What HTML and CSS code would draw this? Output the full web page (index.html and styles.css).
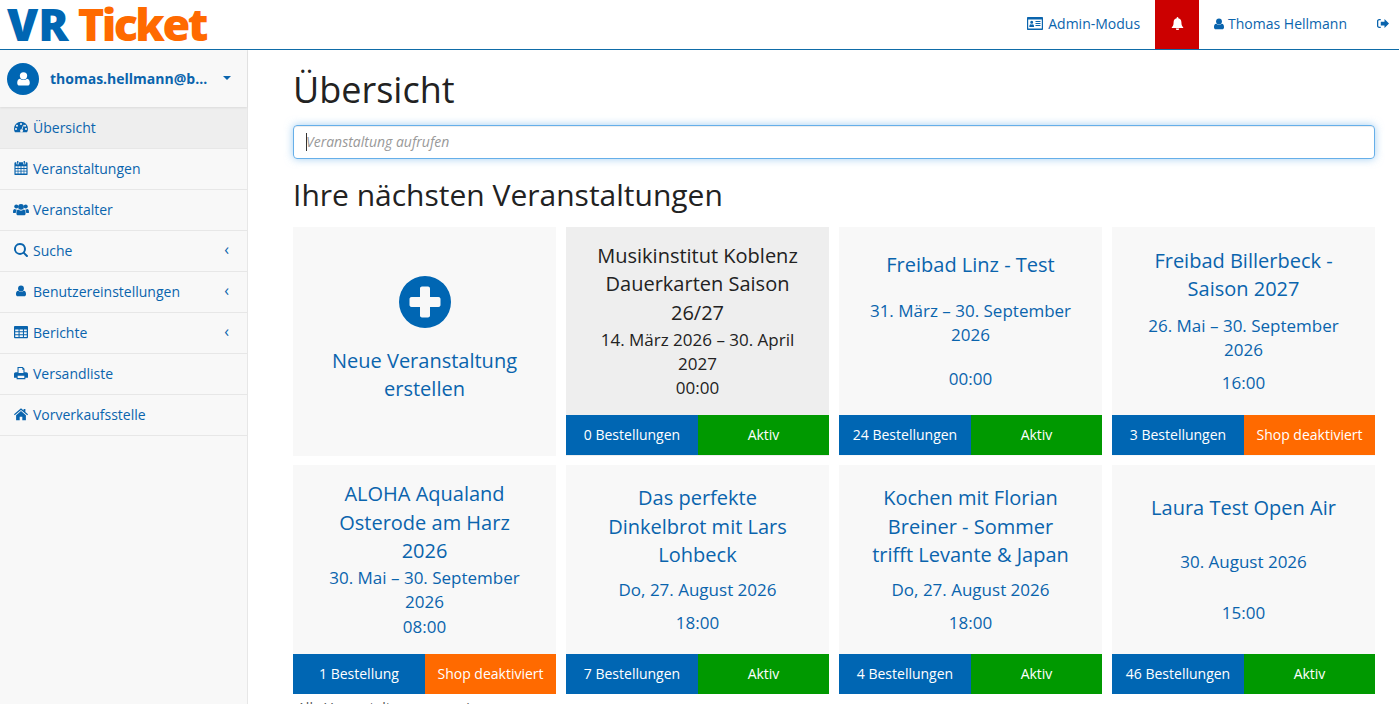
FILE: index.html

```html
<!DOCTYPE html>
<html lang="de">
<head>
  <meta charset="UTF-8" />
  <meta name="viewport" content="width=device-width, initial-scale=1.0">
  <title>VR Ticket</title>
  <link rel="stylesheet" href="styles.css">
</head>
<body>
  <svg class="sprite" aria-hidden="true">
    <symbol id="i-user" viewBox="0 0 16 16"><circle cx="8" cy="4.6" r="3.9"/><path d="M4.2 7.6C5.2 8.6 6.5 9.1 8 9.1s2.800-.5 3.800-1.500c1.900.2 2.900 2 2.900 4.600 0 1.700-1 2.800-2.500 2.800H3.800c-1.500 0-2.500-1.100-2.500-2.800 0-2.600 1-4.400 2.900-4.600z"/></symbol>
    <symbol id="i-gauge" viewBox="0 0 16 16"><path fill-rule="evenodd" d="M8 2a8 8 0 0 0-8 8c0 1.500.4 2.900 1.100 4h13.800c.7-1.100 1.100-2.500 1.100-4a8 8 0 0 0-8-8zM8 3.400a1.200 1.200 0 1 1 0 2.400 1.200 1.200 0 0 1 0-2.400zM3.400 5.300a1.200 1.200 0 1 1 0 2.400 1.200 1.200 0 0 1 0-2.400zM2.300 9a1.200 1.200 0 1 1 0 2.400 1.200 1.200 0 0 1 0-2.400zM13.700 9a1.200 1.200 0 1 1 0 2.400 1.200 1.200 0 0 1 0-2.400zM12.600 5.300a1.200 1.200 0 1 1 0 2.400 1.200 1.200 0 0 1 0-2.400zM10.500 5.500l.9.3-1.800 5.100a1.700 1.700 0 1 1-1-.3z"/></symbol>
    <symbol id="i-calendar" viewBox="0 0 16 16"><path fill-rule="evenodd" d="M3.500 0h1.500v3h-1.500zM11 0h1.500v3H11zM1.500 1.500h1.200v2.200h3V1.500h4.600v2.200h3V1.500h1.200c.6 0 1 .4 1 1V15c0 .6-.4 1-1 1h-13c-.6 0-1-.4-1-1V2.500c0-.6.4-1 1-1zM1.800 6v2h2.400V6zm3.200 0v2h2.500V6zm3.500 0v2H11V6zm3.300 0v2h2.400V6zM1.800 9v2h2.400V9zM5 9v2h2.500V9zm3.500 0v2H11V9zm3.300 0v2h2.400V9zM1.800 12v2.200h2.400V12zM5 12v2.200h2.500V12zm3.500 0v2.200H11V12zm3.300 0v2.200h2.400V12z"/></symbol>
    <symbol id="i-users" viewBox="0 0 18 16"><circle cx="3.700" cy="4.600" r="2.300"/><circle cx="14.300" cy="4.600" r="2.300"/><circle cx="9" cy="5" r="3.300"/><path d="M0 11c0-2.300.8-3.600 2-3.600.7.500 1.400.8 2.300.8-.8 1-1.200 2.200-1.200 3.800H1.200C.5 12 0 11.700 0 11zM18 11c0-2.300-.8-3.600-2-3.600-.7.500-1.400.8-2.300.8.800 1 1.200 2.200 1.200 3.800h1.900c.7 0 1.200-.3 1.200-1zM5.800 8.100C6.700 8.900 7.800 9.300 9 9.300s2.300-.4 3.200-1.200c1.500.2 2 2.100 2 4 0 1.600-.9 2.500-2.200 2.500H6c-1.300 0-2.200-.9-2.200-2.500 0-1.900.5-3.800 2-4z"/></symbol>
    <symbol id="i-search" viewBox="0 0 16 16"><path fill-rule="evenodd" d="M6.800 0a6.800 6.800 0 0 1 5.500 10.800l3.300 3.300a1.100 1.100 0 0 1-1.600 1.600l-3.300-3.300A6.800 6.800 0 1 1 6.800 0zm0 2.200a4.600 4.600 0 1 0 0 9.200 4.600 4.600 0 0 0 0-9.200z"/></symbol>
    <symbol id="i-table" viewBox="0 0 16 16"><path fill-rule="evenodd" d="M1 1h14c.6 0 1 .4 1 1v12c0 .6-.4 1-1 1H1c-.6 0-1-.4-1-1V2c0-.6.4-1 1-1zm.4 4v2.200h3.800V5zm5 0v2.200h3.800V5zm5 0v2.200h3.200V5zM1.400 8.400v2.200h3.800V8.400zm5 0v2.200h3.800V8.400zm5 0v2.200h3.200V8.400zM1.400 11.800v2h3.800v-2zm5 0v2h3.800v-2zm5 0v2h3.200v-2z"/></symbol>
    <symbol id="i-print" viewBox="0 0 16 16"><path fill-rule="evenodd" d="M4 1h6l2 2v4h2c1.100 0 2 .9 2 2v4.500h-3V15H3v-1.500H0V9c0-1.100.9-2 2-2h2zm1.200 1.200V8h5.600V4.200H9.500V2.200zM4.200 11v2.800h7.600V11z"/></symbol>
    <symbol id="i-home" viewBox="0 0 16 16"><path d="M8 1.500l3 2.600V2.200h2v3.600l3 2.600-.8 1L8 3.300.8 9.400 0 8.400z"/><path d="M8 4.700l5.600 4.700V15H9.500v-3.800h-3V15H2.400V9.400z"/></symbol>
    <symbol id="i-card" viewBox="0 0 16 13"><path fill-rule="evenodd" d="M1 0h14c.6 0 1 .4 1 1v11c0 .6-.4 1-1 1H1c-.6 0-1-.4-1-1V1c0-.6.4-1 1-1zm.2 2.600v8.800h13.600V2.600zM4.700 3.800a1.500 1.500 0 1 1 0 3 1.500 1.500 0 0 1 0-3zM2.300 10c0-1.500.5-2.800 1.400-2.800.3.200.6.300 1 .3s.7-.1 1-.3c.9 0 1.400 1.300 1.400 2.800zM8.500 4h5v1.100h-5zm0 2h5v1.100h-5zm0 2h5v1.100h-5z"/></symbol>
    <symbol id="i-bell" viewBox="0 0 16 16"><path d="M8 0c.6 0 1 .4 1 1v.6c2.300.5 3.800 2.300 3.800 4.800 0 3.600.9 5 2.200 6.100v1H1v-1c1.300-1.100 2.200-2.500 2.200-6.100 0-2.500 1.500-4.300 3.800-4.800V1c0-.6.4-1 1-1zM6 14.200h4a2 2 0 0 1-4 0z"/></symbol>
    <symbol id="i-signout" viewBox="0 0 16 14"><path d="M5 1v1.600H3C2.200 2.600 1.700 3.100 1.700 4v6c0 .9.500 1.400 1.300 1.400h2V13H3c-1.800 0-3-1.300-3-3V4c0-1.700 1.200-3 3-3z"/><path d="M10 1l6 6-6 6V9.500H5v-5h5z"/></symbol>
    <symbol id="i-plus" viewBox="0 0 52 52"><path fill-rule="evenodd" d="M26 0a26 26 0 1 1 0 52 26 26 0 0 1 0-52zM23 10.500c-1.100 0-2 .9-2 2V21h-8.500c-1.100 0-2 .9-2 2v6c0 1.100.9 2 2 2H21v8.500c0 1.100.9 2 2 2h6c1.100 0 2-.9 2-2V31h8.500c1.100 0 2-.9 2-2v-6c0-1.100-.9-2-2-2H31v-8.500c0-1.100-.9-2-2-2z"/></symbol>
  </svg>

  <header class="topbar">
    <a class="logo"><span class="logo-vr">VR</span><span class="logo-ticket">Ticket</span></a>
    <nav class="topnav">
      <a class="topnav-link"><svg class="icon icon-card"><use href="#i-card"/></svg>Admin-Modus</a>
      <a class="topnav-bell"><svg class="icon"><use href="#i-bell"/></svg></a>
      <a class="topnav-link topnav-user"><svg class="icon"><use href="#i-user"/></svg>Thomas Hellmann</a>
      <a class="topnav-link topnav-exit"><svg class="icon"><use href="#i-signout"/></svg></a>
    </nav>
  </header>

  <div class="layout">
    <aside class="sidebar">
      <div class="account">
        <span class="avatar"><svg><use href="#i-user"/></svg></span>
        <span class="account-name">thomas.hellmann@bademeister.de</span>
        <span class="caret"></span>
      </div>
      <ul class="menu">
        <li class="menu-item active"><svg class="icon"><use href="#i-gauge"/></svg>Übersicht</li>
        <li class="menu-item"><svg class="icon"><use href="#i-calendar"/></svg>Veranstaltungen</li>
        <li class="menu-item"><svg class="icon icon-users"><use href="#i-users"/></svg>Veranstalter</li>
        <li class="menu-item"><svg class="icon"><use href="#i-search"/></svg>Suche<span class="chevron">‹</span></li>
        <li class="menu-item"><svg class="icon icon-person"><use href="#i-user"/></svg>Benutzereinstellungen<span class="chevron">‹</span></li>
        <li class="menu-item"><svg class="icon"><use href="#i-table"/></svg>Berichte<span class="chevron">‹</span></li>
        <li class="menu-item"><svg class="icon"><use href="#i-print"/></svg>Versandliste</li>
        <li class="menu-item"><svg class="icon"><use href="#i-home"/></svg>Vorverkaufsstelle</li>
      </ul>
    </aside>

    <main class="content">
      <h1>Übersicht</h1>
      <div class="search"><span class="caret-line"></span><input class="search-input" placeholder="Veranstaltung aufrufen"></div>
      <h2>Ihre nächsten Veranstaltungen</h2>

      <div class="cards">
        <a class="card card-new">
          <svg class="plus"><use href="#i-plus"/></svg>
          <div class="card-title">Neue Veranstaltung erstellen</div>
        </a>

        <a class="card hover">
          <div class="card-body">
            <div class="card-title">Musikinstitut Koblenz Dauerkarten Saison 26/27</div>
            <div class="card-date">14. März 2026 – 30. April 2027</div>
            <div class="card-date">00:00</div>
          </div>
          <div class="card-foot"><span class="orders">0 Bestellungen</span><span class="state">Aktiv</span></div>
        </a>

        <a class="card">
          <div class="card-body">
            <div class="card-title">Freibad Linz - Test</div>
            <div class="card-date">31. März – 30. September 2026</div>
            <div class="card-date">00:00</div>
          </div>
          <div class="card-foot"><span class="orders">24 Bestellungen</span><span class="state">Aktiv</span></div>
        </a>

        <a class="card">
          <div class="card-body">
            <div class="card-title">Freibad Billerbeck - Saison 2027</div>
            <div class="card-date">26. Mai – 30. September 2026</div>
            <div class="card-date">16:00</div>
          </div>
          <div class="card-foot"><span class="orders">3 Bestellungen</span><span class="state off">Shop deaktiviert</span></div>
        </a>

        <a class="card">
          <div class="card-body">
            <div class="card-title">ALOHA Aqualand Osterode am Harz 2026</div>
            <div class="card-date">30. Mai – 30. September 2026</div>
            <div class="card-date">08:00</div>
          </div>
          <div class="card-foot"><span class="orders">1 Bestellung</span><span class="state off">Shop deaktiviert</span></div>
        </a>

        <a class="card">
          <div class="card-body">
            <div class="card-title">Das perfekte Dinkelbrot mit Lars Lohbeck</div>
            <div class="card-date">Do, 27. August 2026</div>
            <div class="card-date">18:00</div>
          </div>
          <div class="card-foot"><span class="orders">7 Bestellungen</span><span class="state">Aktiv</span></div>
        </a>

        <a class="card">
          <div class="card-body">
            <div class="card-title">Kochen mit Florian Breiner - Sommer trifft Levante &amp; Japan</div>
            <div class="card-date">Do, 27. August 2026</div>
            <div class="card-date">18:00</div>
          </div>
          <div class="card-foot"><span class="orders">4 Bestellungen</span><span class="state">Aktiv</span></div>
        </a>

        <a class="card">
          <div class="card-body">
            <div class="card-title">Laura Test Open Air</div>
            <div class="card-date">30. August 2026</div>
            <div class="card-date">15:00</div>
          </div>
          <div class="card-foot"><span class="orders">46 Bestellungen</span><span class="state">Aktiv</span></div>
        </a>
      </div>

      <p class="more">Alle Veranstaltungen anzeigen</p>
    </main>
  </div>
</body>
</html>
```

FILE: styles.css

```css
* { box-sizing: border-box; }
html, body {
  margin: 0; padding: 0; height: 100%;
  overflow: hidden;
  font-family: 'Open Sans', sans-serif;
  font-size: 14px;
  color: #222;
  background: #fff;
}
.sprite { display: none; }
.icon { width: 14px; height: 14px; fill: currentColor; flex: none; }

/* top bar */
.topbar {
  display: flex; justify-content: space-between;
  height: 50px;
  border-bottom: 1px solid #0f6ca8;
}
.logo {
  display: flex; align-items: center; gap: 9px;
  padding: 0 0 3px 7px;
  font-size: 45px; font-weight: 800; line-height: 1;
}
.logo-vr { color: #0066b3; }
.logo-ticket { color: #ff6a00; letter-spacing: -2.6px; }
.topnav { display: flex; align-items: stretch; color: #0a64ad; }
.topnav-link {
  display: flex; align-items: center; gap: 5px;
  padding: 0 15px 2px;
}
.topnav-link .icon-card { width: 16px; height: 13px; }
.topnav-user { padding-left: 14px; gap: 3px; }
.topnav-user .icon { width: 12px; height: 12px; }
.topnav-bell {
  display: flex; align-items: center; justify-content: center;
  width: 44px;
  padding-bottom: 2px;
  background: #cc0000; color: #fff;
}
.topnav-bell .icon { width: 13px; height: 13px; }
.topnav-exit { padding: 0 10px 2px 15px; }
.topnav-exit .icon { width: 12px; height: 11px; }

.layout { display: flex; height: calc(100% - 50px); }

/* sidebar */
.sidebar {
  flex: none;
  width: 248px;
  background: #f8f8f8;
  border-right: 1px solid #e7e7e7;
}
.account {
  display: flex; align-items: center;
  height: 57px;
  padding: 0 15px 0 7px;
  box-shadow: 0 1px 2px rgba(0,0,0,0.08);
  position: relative;
}
.avatar {
  flex: none;
  display: flex; align-items: center; justify-content: center;
  width: 32px; height: 32px;
  border-radius: 50%;
  background: #0066b3;
}
.avatar svg { width: 15px; height: 16px; fill: #fff; }
.account-name {
  margin-left: 11px;
  width: 159px;
  font-weight: 700; color: #0a64ad;
  white-space: nowrap; overflow: hidden; text-overflow: ellipsis;
}
.caret {
  margin-left: 14px; margin-bottom: 2px;
  border-top: 4px solid #0a64ad;
  border-left: 4px solid transparent;
  border-right: 4px solid transparent;
}
.menu { list-style: none; margin: 0; padding: 0; }
.menu-item {
  display: flex; align-items: center; gap: 5px;
  height: 41px;
  padding: 0 18px 2px 14px;
  border-bottom: 1px solid #e7e7e7;
  color: #0a64ad;
}
.menu-item.active { height: 42px; padding-bottom: 1px; background: #eee; }
.icon-users { width: 16px; margin: 0 -1px; height: 15px; }
.icon-person { width: 12px; height: 12px; margin: 0 1px; }
.chevron { margin-left: auto; font-size: 16px; line-height: 1; padding-bottom: 3px; }

/* main column */
.content { flex: 1; min-width: 0; padding: 0 24px 0 45px; }
h1 { margin: 15px 0 10px; font-size: 36px; font-weight: 400; line-height: 50px; }
h2 { margin: 15px 0 10.8px; font-size: 30px; font-weight: 400; line-height: 42px; }
.search {
  position: relative;
  height: 34px;
  border: 1px solid #66afe9;
  border-radius: 4px;
  box-shadow: inset 0 1px 1px rgba(0,0,0,0.075), 0 0 8px rgba(102,175,233,0.6);
}
.caret-line {
  position: absolute; left: 12px; top: 7px;
  width: 1px; height: 18px; background: #333;
}
.search-input {
  width: 100%; height: 100%;
  padding: 0 12px 2px;
  border: 0; outline: 0; background: transparent;
  font: italic 14px 'Open Sans', sans-serif;
}
.search-input::placeholder { color: #999; }

/* event cards */
.cards {
  display: grid;
  grid-template-columns: repeat(4, 263px);
  grid-auto-rows: 229px;
  gap: 9.5px 10px;
}
.card {
  display: flex; flex-direction: column;
  background: #f8f8f8;
  color: #0a64ad;
  text-align: center;
}
.card.hover { background: #eee; color: #222; }
.card-new { align-items: center; padding-top: 49px; }
.plus { width: 52px; height: 52px; fill: #0066b3; margin-bottom: 19px; }
.card-new .card-title { padding: 0 30px; }
.card-body {
  flex: 1;
  display: flex; flex-direction: column; justify-content: space-around;
  padding: 15px 30px;
}
.card-title { font-size: 20px; line-height: 28.5px; }
.card-date { font-size: 17px; line-height: 24px; }
.card-foot {
  display: flex;
  height: 40px;
  margin-bottom: .5px;
  color: #fff; font-weight: 500;
  line-height: 40px;
}
.orders { flex: 0 0 132px; background: #0066b3; }
.state { flex: 1; background: #009900; }
.state.off { background: #ff6a00; }
.more { margin: 4px 0 0 4px; line-height: 20px; color: #555; }
```
